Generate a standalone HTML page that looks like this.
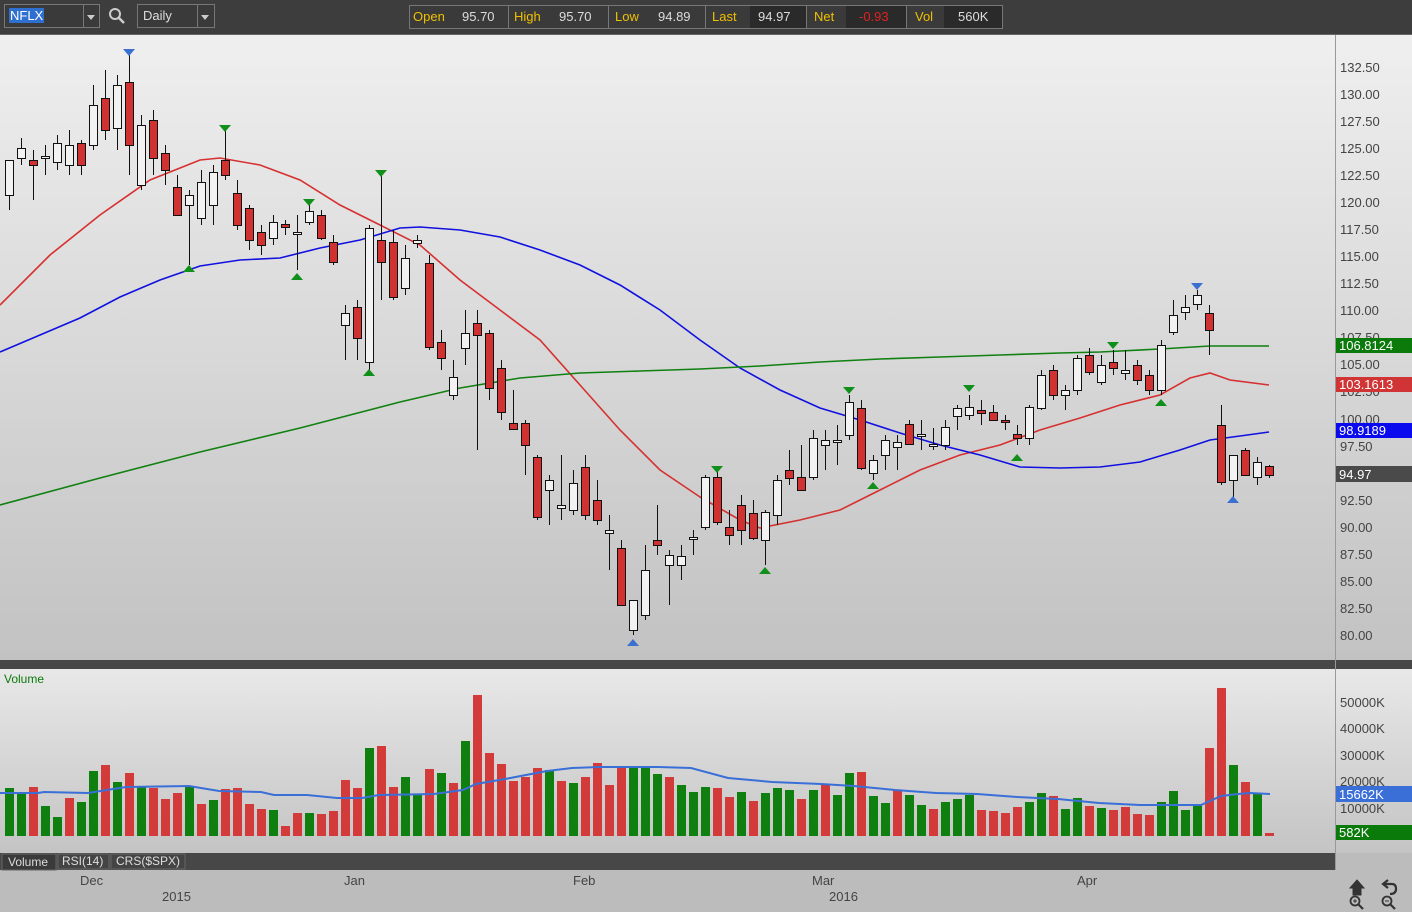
<!DOCTYPE html>
<html><head><meta charset="utf-8"><style>
body{margin:0;width:1412px;height:912px;overflow:hidden;background:#bcbcbc;font-family:"Liberation Sans",sans-serif;}
#top{position:absolute;left:0;top:0;width:1412px;height:34px;background:#3d3d3d;border-bottom:1px solid #666}
.box{position:absolute;border:1px solid #777;background:#3a3a3a;color:#ddd;font-size:13px}
</style></head><body>
<div id="top">
 <div class="box" style="left:4px;top:4px;width:94px;height:22px;"><span style="position:absolute;left:4px;top:3px;background:#2f6fd0;color:#fff;padding:0 1px">NFLX</span><div style="position:absolute;left:78px;top:0;width:15px;height:22px;border-left:1px solid #777"></div><div style="position:absolute;left:82px;top:10px;border:4px solid transparent;border-top:5px solid #ccc"></div></div>
 <svg style="position:absolute;left:108px;top:7px" width="18" height="18"><circle cx="7" cy="7" r="5" fill="none" stroke="#ccc" stroke-width="2"/><line x1="11" y1="11" x2="16" y2="16" stroke="#ccc" stroke-width="2.5"/></svg>
 <div class="box" style="left:137px;top:4px;width:76px;height:22px;"><span style="position:absolute;left:5px;top:3px">Daily</span><div style="position:absolute;left:59px;top:0;width:16px;height:22px;border-left:1px solid #777"></div><div style="position:absolute;left:63px;top:10px;border:4px solid transparent;border-top:5px solid #ccc"></div></div>
 <div class="box" style="left:409px;top:5px;width:592px;height:22px;font-size:13px;line-height:22px">
  <span style="position:absolute;left:3px;color:#f0c000">Open</span><span style="position:absolute;left:52px">95.70</span><div style="position:absolute;left:98px;top:0;height:22px;border-left:1px solid #777"></div>
  <span style="position:absolute;left:104px;color:#f0c000">High</span><span style="position:absolute;left:149px">95.70</span><div style="position:absolute;left:198px;top:0;height:22px;border-left:1px solid #777"></div>
  <span style="position:absolute;left:205px;color:#f0c000">Low</span><span style="position:absolute;left:248px">94.89</span><div style="position:absolute;left:295px;top:0;height:22px;border-left:1px solid #777"></div>
  <span style="position:absolute;left:302px;color:#f0c000">Last</span><div style="position:absolute;left:340px;top:0;width:56px;height:22px;background:#2a2a2a"></div><span style="position:absolute;left:348px">94.97</span><div style="position:absolute;left:396px;top:0;height:22px;border-left:1px solid #777"></div>
  <span style="position:absolute;left:404px;color:#f0c000">Net</span><div style="position:absolute;left:436px;top:0;width:60px;height:22px;background:#2a2a2a"></div><span style="position:absolute;left:449px;color:#e02020">-0.93</span><div style="position:absolute;left:496px;top:0;height:22px;border-left:1px solid #777"></div>
  <span style="position:absolute;left:505px;color:#f0c000">Vol</span><div style="position:absolute;left:534px;top:0;width:58px;height:22px;background:#2a2a2a"></div><span style="position:absolute;left:548px">560K</span>
 </div>
</div>
<svg id="c" style="position:absolute;left:0;top:35px" width="1412" height="877" viewBox="0 35 1412 877" font-family="Liberation Sans, sans-serif">
<defs>
<linearGradient id="g1" x1="0" y1="0" x2="0" y2="1"><stop offset="0" stop-color="#efefef"/><stop offset="1" stop-color="#c2c2c2"/></linearGradient>
<linearGradient id="g2" x1="0" y1="0" x2="0" y2="1"><stop offset="0" stop-color="#e8e8e8"/><stop offset="1" stop-color="#c4c4c4"/></linearGradient>
</defs>
<rect x="0" y="35" width="1335" height="625" fill="url(#g1)"/>
<rect x="1335" y="35" width="77" height="625" fill="url(#g1)"/>
<rect x="0" y="660" width="1412" height="9" fill="#474747"/>
<rect x="0" y="669" width="1335" height="184" fill="url(#g2)"/>
<rect x="1335" y="669" width="77" height="184" fill="url(#g2)"/>
<line x1="1335.5" y1="35" x2="1335.5" y2="870" stroke="#999"/>
<rect x="0" y="853" width="1335" height="17" fill="#474747"/>
<rect x="0" y="870" width="1412" height="42" fill="#bcbcbc"/>
<g id="axis" font-size="13" fill="#444"></g>
<g id="vol"></g>
<g id="ma" fill="none" stroke-width="1.6"></g>
<g id="cd"></g>
<g id="tri"></g>
<g id="tags" font-size="13" fill="#fff"></g>
<text x="4" y="683" font-size="12" fill="#0a7a0a">Volume</text>
<rect x="2" y="854" width="54" height="16" fill="#3a3a3a" stroke="#666"/><text x="8" y="866" font-size="12" fill="#ddd">Volume</text>
<rect x="58" y="854" width="51" height="15" fill="#444" stroke="#666"/><text x="62" y="865" font-size="12" fill="#ddd">RSI(14)</text>
<rect x="111" y="854" width="74" height="15" fill="#444" stroke="#666"/><text x="116" y="865" font-size="12" fill="#ddd">CRS($SPX)</text>
<g font-size="13" fill="#444"><text x="80" y="885">Dec</text><text x="344" y="885">Jan</text><text x="573" y="885">Feb</text><text x="812" y="885">Mar</text><text x="1077" y="885">Apr</text><text x="162" y="901">2015</text><text x="829" y="901">2016</text></g>
<g fill="#333" stroke="#333"><path d="M1350 888 L1357 880 L1364 888 L1361 888 L1361 895 L1353 895 L1353 888Z"/><path d="M1388 880 L1383 884 L1388 888 M1384 884 L1392 884 Q1396 884 1396 889 Q1396 894 1390 894" fill="none" stroke-width="2.2"/><circle cx="1355" cy="901" r="4.5" fill="none" stroke-width="1.8"/><line x1="1358" y1="904" x2="1363" y2="909" stroke-width="2.2"/><line x1="1353" y1="901" x2="1357" y2="901"/><line x1="1355" y1="899" x2="1355" y2="903"/><circle cx="1387" cy="901" r="4.5" fill="none" stroke-width="1.8"/><line x1="1390" y1="904" x2="1395" y2="909" stroke-width="2.2"/><line x1="1385" y1="901" x2="1389" y2="901"/></g>
</svg>
<script>
var NS="http://www.w3.org/2000/svg";
function el(p,t,a,tx){var e=document.createElementNS(NS,t);for(var k in a)e.setAttribute(k,a[k]);if(tx)e.textContent=tx;document.getElementById(p).appendChild(e);return e;}
var ax=[["132.50",72],["130.00",99],["127.50",126],["125.00",153],["122.50",180],["120.00",207],["117.50",234],["115.00",261],["112.50",288],["110.00",315],["107.50",342],["105.00",369],["102.50",396],["100.00",424],["97.50",451],["92.50",505],["90.00",532],["87.50",559],["85.00",586],["82.50",613],["80.00",640],["50000K",707],["40000K",733],["30000K",760],["20000K",786],["10000K",813]];
ax.forEach(function(a){el("axis","text",{x:1340,y:a[1]},a[0]);});
var C=[[160,210,160,195,0],[138,165,148,158,0],[150,200,160,165,1],[145,175,156,158,0],[135,170,143,162,0],[130,175,145,165,0],[140,175,143,165,1],[85,150,105,145,0],[70,140,98,130,1],[75,150,85,128,0],[52,175,82,145,1],[115,190,125,185,0],[110,175,120,158,1],[145,185,153,170,1],[175,215,187,215,1],[190,265,195,205,0],[170,225,182,218,0],[165,225,172,205,0],[130,180,160,175,1],[180,230,193,225,1],[205,250,208,240,1],[225,255,232,245,1],[215,245,222,238,0],[220,235,224,227,1],[215,270,232,234,0],[200,225,211,222,0],[210,240,215,238,1],[235,265,242,262,1],[305,360,313,325,0],[300,360,307,338,1],[225,370,228,362,0],[175,300,240,262,1],[230,300,242,297,1],[245,295,258,288,0],[235,248,240,243,0],[255,350,263,347,1],[330,370,342,358,1],[360,400,377,395,0],[310,365,333,348,0],[310,450,323,335,1],[330,400,333,388,1],[360,420,368,412,1],[390,430,423,429,1],[420,475,423,445,1],[455,520,457,517,1],[475,525,480,490,0],[455,520,505,508,0],[470,515,483,510,0],[455,520,467,515,1],[480,525,500,520,1],[515,570,530,533,0],[540,605,548,605,1],[600,635,600,630,0],[545,620,570,615,0],[505,555,540,545,1],[550,605,555,565,0],[545,580,556,565,0],[530,555,537,539,0],[475,530,477,527,0],[470,525,477,522,1],[510,545,527,535,1],[495,545,505,530,1],[500,540,513,538,1],[510,565,512,540,0],[475,525,480,515,0],[450,485,470,478,1],[445,490,477,490,1],[430,480,438,477,0],[430,470,440,445,0],[425,465,440,442,0],[395,440,402,435,0],[400,470,408,468,1],[455,480,460,473,0],[435,470,440,455,0],[435,470,442,447,0],[420,445,424,444,1],[420,450,434,436,0],[428,450,444,446,0],[420,450,427,445,0],[405,430,408,416,0],[395,420,407,415,0],[400,425,410,413,1],[405,420,412,420,1],[415,430,420,422,1],[425,445,434,438,1],[405,445,407,438,0],[370,410,375,408,0],[365,400,370,395,1],[385,410,390,395,0],[355,395,358,390,0],[348,375,355,372,1],[355,385,365,382,0],[350,375,362,368,1],[350,380,370,373,0],[360,385,365,380,1],[370,395,375,390,1],[340,395,345,390,0],[300,335,315,332,0],[295,320,307,312,0],[290,310,295,304,0],[305,355,313,330,1],[405,485,425,482,1],[455,500,455,480,0],[448,475,450,475,1],[457,485,462,477,0],[465,478,466,475,1]];
var VT=[324,339,321,378,411,354,366,273,255,306,279,321,324,357,339,321,372,360,327,324,372,387,390,438,399,399,402,393,300,324,204,198,321,291,345,267,279,309,183,45,219,252,303,291,264,270,303,309,291,249,315,261,261,261,
282,291,315,336,321,324,351,336,363,339,324,330,357,330,315,345,279,276,348,369,330,345,375,387,366,357,345,390,393,399,381,366,339,348,387,354,378,384,390,381,402,405,366,333,390,375,204,24,255,306,339,459];
var VC="ggrggrggrgrgrrrgrgrrrrgrrgrrrrgrrggrgrgrrrrrrgrgrrrrgg"+"grgggrrgrgggrgrggrggrggrgggrrrrggrggrgrrrrggggrrgrgr";
var n=C.length,dx=12;
C.forEach(function(c,i){var x=9+i*dx;
 var v=680+VT[i]/3;el("vol","rect",{x:x-4,y:v,width:9,height:836-v,fill:VC[i]=="r"?"#d33a3a":"#0f800f"});
 el("cd","line",{x1:x+.5,y1:c[0],x2:x+.5,y2:c[1],stroke:"#111","stroke-width":1});
 el("cd","rect",{x:x-3.5,y:c[2]+.5,width:8,height:Math.max(1,c[3]-c[2]),fill:c[4]?"#d03232":"#f2f2f2",stroke:"#111","stroke-width":1});});
function pl(pts,col,w){el("ma","polyline",{points:pts,stroke:col,"stroke-width":w||1.6});}
pl("0,305 50,255 100,215 150,180 200,160 220,158 260,165 300,180 340,205 380,225 420,245 460,280 500,310 540,340 580,385 620,430 660,470 700,497 740,520 760,528 800,520 840,510 880,490 920,470 960,455 1000,445 1040,430 1080,418 1120,405 1160,395 1190,378 1210,373 1230,380 1269,385","#d63030");
pl("0,352 40,335 80,318 120,297 160,280 200,266 240,260 280,258 320,248 360,240 400,228 420,227 460,230 500,237 540,250 580,265 620,285 660,310 700,340 740,368 780,390 820,408 860,420 900,433 940,445 980,455 1020,467 1060,468 1100,467 1140,462 1180,450 1210,440 1240,436 1269,432","#1010e0");
pl("0,505 100,478 200,452 300,428 400,402 460,388 520,378 580,373 640,371 700,369 760,366 820,362 880,359 940,357 1000,355 1060,353 1100,352 1160,349 1210,346 1269,346","#108010");
pl("0,793 38,793 44,792 88,793 126,787 189,786 219,791 261,792 274,795 307,795 337,798 362,798 379,795 434,794 463,790 476,784 505,779 547,771 572,768 600,767 658,767 691,768 728,778 772,782 821,784 854,786 895,790 936,793 977,794 1017,797 1058,799 1099,803 1140,805 1201,805 1221,796 1238,794 1250,793 1270,794","#3a6fd8",2);
function tri(x,y,up,col){el("tri","polygon",{points:up?(x-6)+","+(y+4)+" "+(x+6)+","+(y+4)+" "+x+","+(y-3):(x-6)+","+(y-4)+" "+(x+6)+","+(y-4)+" "+x+","+(y+3),fill:col});}
[[189,268],[297,276],[369,372],[765,570],[873,485],[1017,457],[1161,402]].forEach(function(t){tri(t[0],t[1],1,"#10901a");});
[[225,129],[309,203],[381,174],[717,470],[849,391],[969,389],[1113,346]].forEach(function(t){tri(t[0],t[1],0,"#10901a");});
tri(129,53,0,"#3a70d0");tri(1197,287,0,"#3a70d0");tri(633,642,1,"#3a70d0");tri(1233,499,1,"#3a70d0");
function tag(y,h,col,t){el("tags","rect",{x:1336,y:y,width:76,height:h,fill:col});el("tags","text",{x:1339,y:y+h-3},t);}
tag(338,15,"#0a7a0a","106.8124");tag(377,15,"#d03434","103.1613");tag(423,15,"#0a0aee","98.9189");tag(466,16,"#4a4a4a","94.97");
tag(786,16,"#3a6fd8","15662K");tag(825,15,"#0a7a0a","582K");
</script>
</body></html>
